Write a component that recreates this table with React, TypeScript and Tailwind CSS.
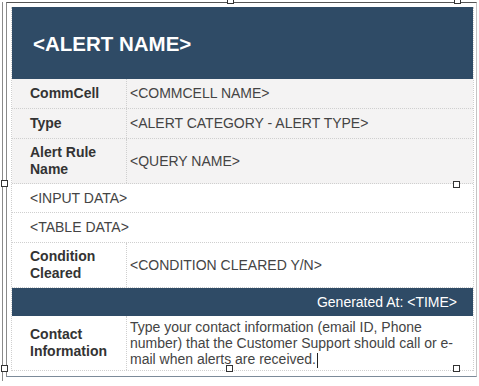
import React from "react";

const font = { fontFamily: '"Liberation Sans", Arial, sans-serif' };

function Handle({ className }: { className: string }) {
  return <div className={`absolute w-[7px] h-[7px] border border-[#333] bg-white ${className}`} />;
}

function Row({
  label,
  value,
  bg,
  h,
}: {
  label: React.ReactNode;
  value: React.ReactNode;
  bg: string;
  h: string;
}) {
  return (
    <div className={`flex ${h} ${bg} border-b border-dotted border-[#cfcfcf]`}>
      <div className="w-[115px] shrink-0 border-r border-dotted border-[#cfcfcf] flex items-center pl-[18px] text-[14px] font-bold leading-[17px] text-[#333]">
        {label}
      </div>
      <div className="flex-1 flex items-center pl-[3px] text-[14px] text-[#444]">{value}</div>
    </div>
  );
}

export default function App() {
  return (
    <div className="relative w-[479px] h-[386px] bg-white overflow-hidden pl-[2px]" style={font}>
      {/* editor frame */}
      <div className="border-l border-[#8a8a8a] pl-[3px] pb-[4px]">
        <div className="mt-[2px] w-[471px] border-l border-[#8a8a8a] border-t border-t-[#555] border-r border-r-[#c4c4c4] border-b border-b-[#7c8a99] pt-[4px] pl-[4px] pb-[5px]">
          <div className="w-[463px] border-l border-r border-dotted border-[#cfcfcf]">
            <div className="h-[72px] bg-[#2f4b66] flex items-center pl-[21px] pt-[2px] text-white font-bold text-[20.5px]">
              &lt;ALERT NAME&gt;
            </div>
            <Row label="CommCell" value="<COMMCELL NAME>" bg="bg-[#f4f3f3]" h="h-[30px]" />
            <Row label="Type" value="<ALERT CATEGORY - ALERT TYPE>" bg="bg-[#f4f3f3]" h="h-[30px]" />
            <Row
              label={
                <span>
                  Alert Rule
                  <br />
                  Name
                </span>
              }
              value="<QUERY NAME>"
              bg="bg-[#f4f3f3]"
              h="h-[45px]"
            />
            <div className="h-[29px] flex items-center pl-[18px] text-[14px] text-[#444] border-b border-dotted border-[#cfcfcf]">
              &lt;INPUT DATA&gt;
            </div>
            <div className="h-[30px] flex items-center pl-[18px] text-[14px] text-[#444] border-b border-dotted border-[#cfcfcf]">
              &lt;TABLE DATA&gt;
            </div>
            <Row
              label={
                <span>
                  Condition
                  <br />
                  Cleared
                </span>
              }
              value="<CONDITION CLEARED Y/N>"
              bg="bg-white"
              h="h-[45px]"
            />
            <div className="h-[28px] bg-[#2f4b66] flex items-center justify-end pr-[16px] text-white text-[14px]">
              Generated At: &lt;TIME&gt;
            </div>
            <div className="flex h-[55px] border-b border-dotted border-[#cfcfcf]">
              <div className="w-[115px] shrink-0 border-r border-dotted border-[#cfcfcf] flex items-center pl-[18px] text-[14px] font-bold leading-[17px] text-[#333]">
                <span>
                  Contact
                  <br />
                  Information
                </span>
              </div>
              <div className="flex-1 pl-[3px] pr-[14px] pt-[3px] text-[14px] leading-[16px] text-[#444]">
                Type your contact information (email ID, Phone number) that the Customer Support should call or e-mail when alerts are received.
                <span className="inline-block w-px h-[15px] bg-[#222] align-middle ml-px" />
              </div>
            </div>
          </div>
        </div>
      </div>

      <Handle className="left-[227px] top-[-3px]" />
      <Handle className="left-[454px] top-[-3px]" />
      <Handle className="left-[1px] top-[180px]" />
      <Handle className="left-[453px] top-[181px]" />
      <Handle className="left-[1px] top-[365px]" />
      <Handle className="left-[226px] top-[365px]" />
      <Handle className="left-[453px] top-[365px]" />
    </div>
  );
}
